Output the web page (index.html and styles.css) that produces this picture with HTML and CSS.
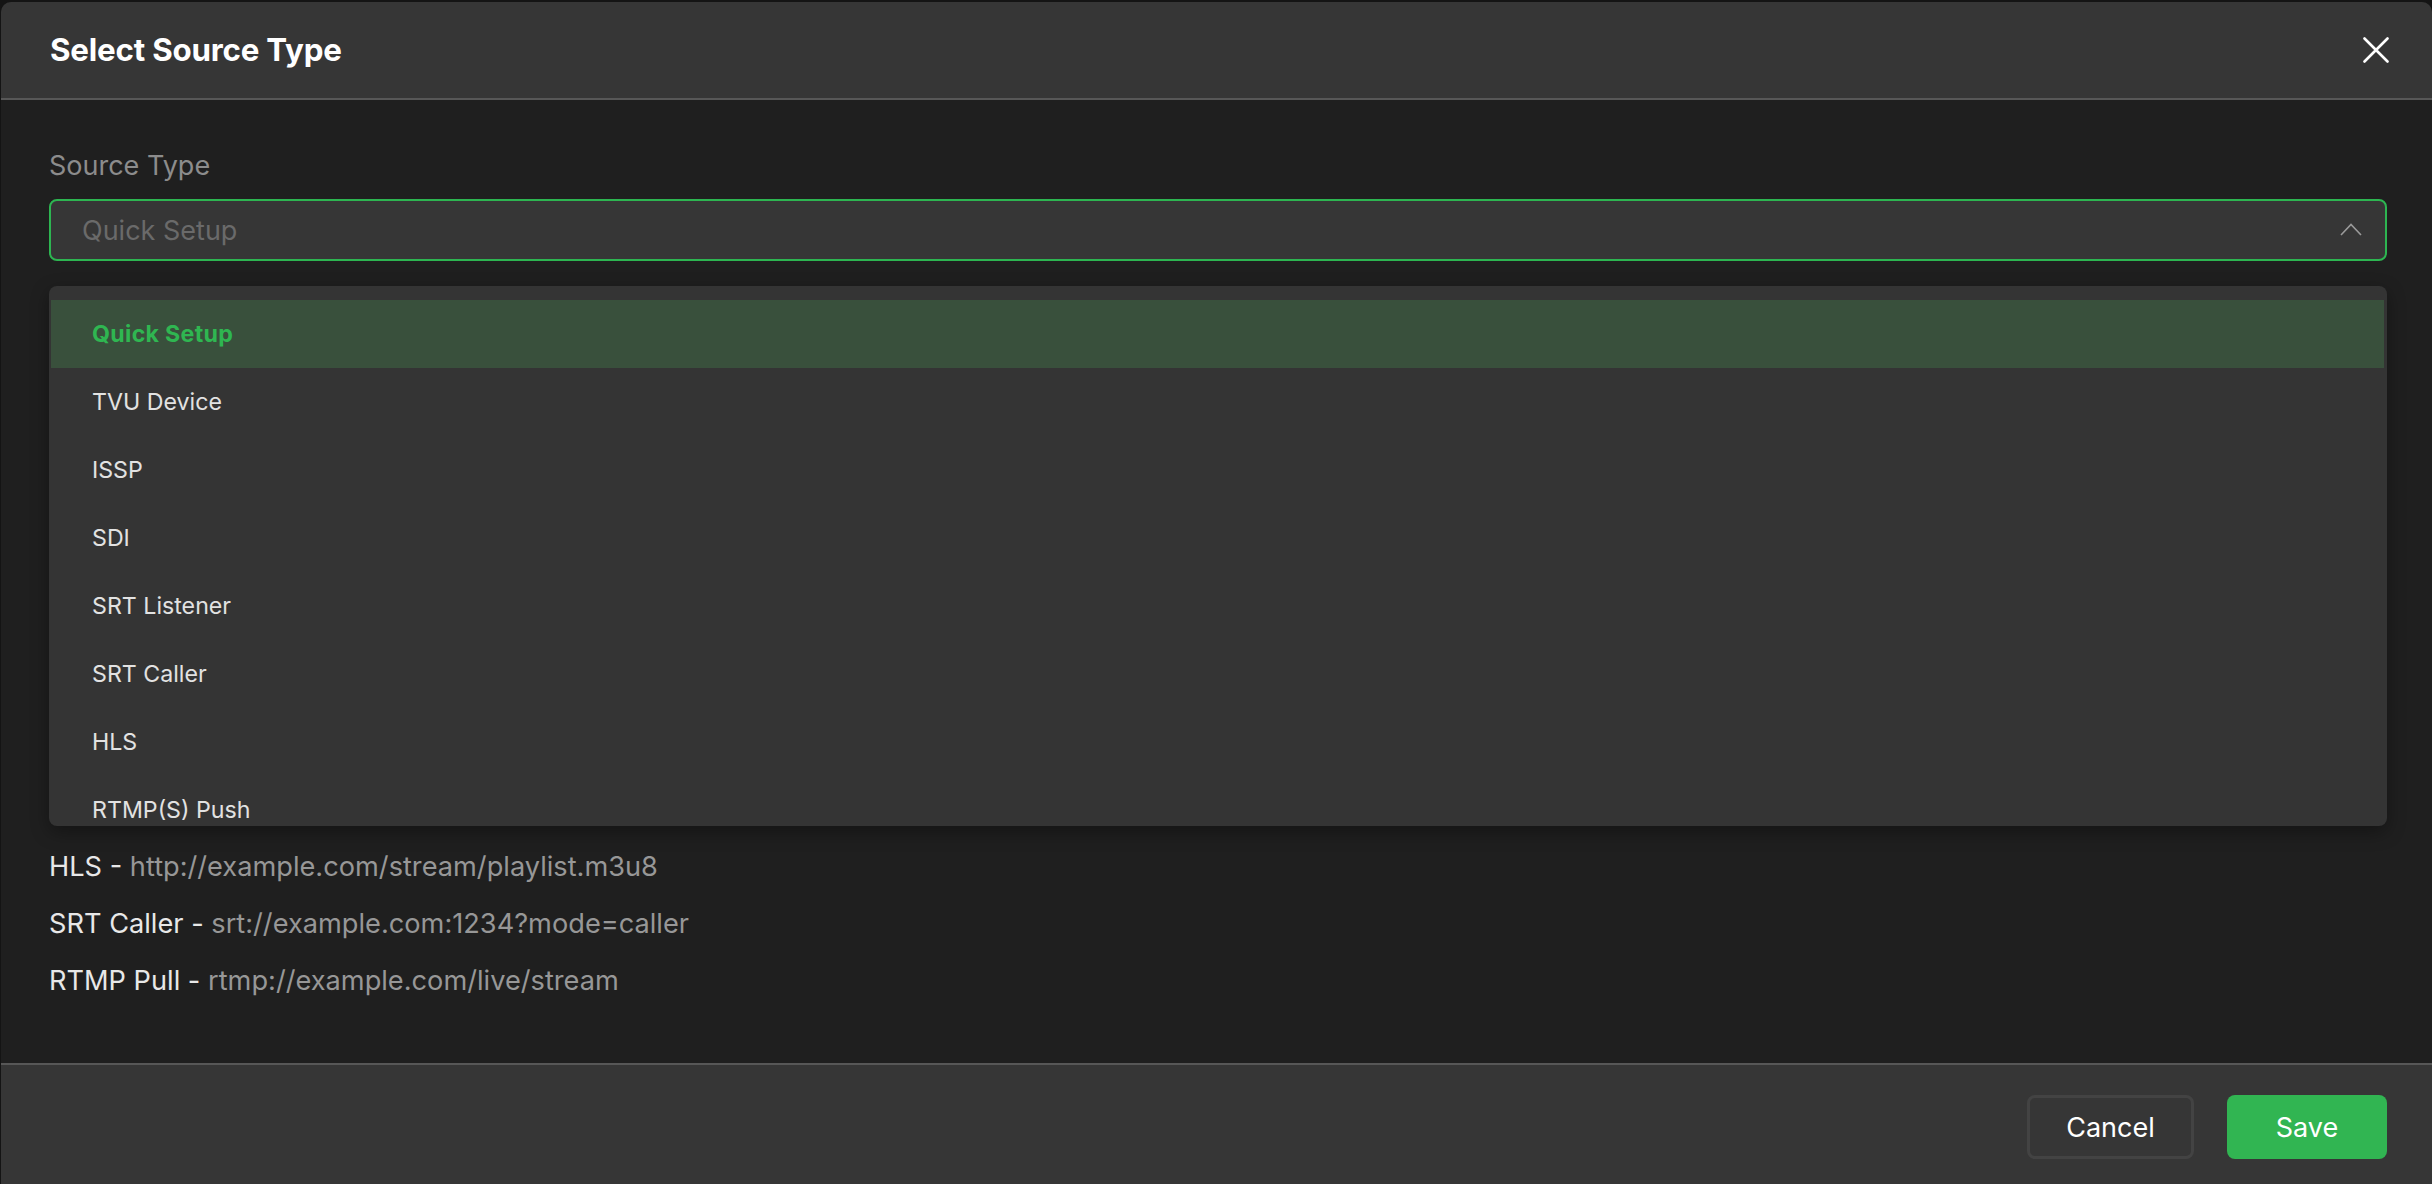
FILE: index.html
```html
<!DOCTYPE html>
<html lang="en">
<head>
<meta charset="utf-8">
<title>Select Source Type</title>
<link rel="stylesheet" href="styles.css">
</head>
<body>
<div class="modal">
  <header class="modal-header">
    <h2 class="modal-title">Select Source Type</h2>
    <button class="close-btn" aria-label="Close">
      <svg width="26" height="26" viewBox="0 0 26 26"><path d="M1.5 1.5 L24.5 24.5 M24.5 1.5 L1.5 24.5" stroke="#ffffff" stroke-width="2.6" stroke-linecap="round" fill="none"/></svg>
    </button>
  </header>
  <main class="modal-body">
    <label class="field-label">Source Type</label>
    <div class="select-wrap">
      <div class="select">
        <span class="placeholder">Quick Setup</span>
        <svg class="chevron" width="22" height="13" viewBox="0 0 22 13"><path d="M1 12 L11 1.5 L21 12" stroke="#9a9a9a" stroke-width="1.6" fill="none"/></svg>
      </div>
      <ul class="dropdown">
        <li class="option active">Quick Setup</li>
        <li class="option">TVU Device</li>
        <li class="option">ISSP</li>
        <li class="option">SDI</li>
        <li class="option">SRT Listener</li>
        <li class="option">SRT Caller</li>
        <li class="option">HLS</li>
        <li class="option">RTMP(S) Push</li>
      </ul>
    </div>
    <div class="examples">
      <p class="example"><span class="ex-key">HLS - </span><span class="ex-val">http://example.com/stream/playlist.m3u8</span></p>
      <p class="example"><span class="ex-key">SRT Caller - </span><span class="ex-val">srt://example.com:1234?mode=caller</span></p>
      <p class="example"><span class="ex-key">RTMP Pull - </span><span class="ex-val">rtmp://example.com/live/stream</span></p>
    </div>
  </main>
  <footer class="modal-footer">
    <button class="btn btn-cancel">Cancel</button>
    <button class="btn btn-save">Save</button>
  </footer>
</div>
</body>
</html>
```
FILE: styles.css
```css
* { box-sizing: border-box; }
html, body {
  margin: 0;
  padding: 0;
  height: 100%;
  overflow: hidden;
  background: #141414;
  font-family: Inter, "Noto Sans", "Liberation Sans", sans-serif;
}
.modal {
  margin: 2px 0 0 1px;
  height: calc(100vh - 2px);
  display: flex;
  flex-direction: column;
  background: #1f1f1f;
  border-radius: 10px 10px 0 0;
  overflow: hidden;
}
.modal-header {
  flex: 0 0 98px;
  display: flex;
  align-items: center;
  justify-content: space-between;
  padding: 0 43px 0 49px;
  background: #363636;
  border-bottom: 2px solid #575757;
}
.modal-title {
  margin: 0;
  font-size: 31.3px;
  font-weight: 700;
  color: #ffffff;
  letter-spacing: -0.2px;
}
.close-btn {
  width: 26px;
  height: 26px;
  padding: 0;
  border: 0;
  background: none;
  display: flex;
  cursor: pointer;
}
.modal-body {
  flex: 1;
  padding: 46px 45px 0 48px;
  display: flex;
  flex-direction: column;
}
.field-label {
  display: block;
  height: 40px;
  line-height: 40px;
  font-size: 27px;
  color: #8c8c8c;
}
.select-wrap {
  position: relative;
  margin-top: 13px;
}
.select {
  height: 62px;
  border: 2px solid #2db551;
  border-radius: 8px;
  background: #363636;
  display: flex;
  align-items: center;
  justify-content: space-between;
  padding: 0 23px 0 31px;
}
.placeholder {
  font-size: 27px;
  color: #6a6a6a;
}
.chevron { display: block; margin-top: -2px; }
.dropdown {
  position: absolute;
  top: 87px;
  left: 0;
  right: 0;
  height: 540px;
  margin: 0;
  padding: 14px 3px 0 2px;
  list-style: none;
  background: #343434;
  border-radius: 8px;
  overflow: hidden;
  box-shadow: 0 6px 18px rgba(0, 0, 0, 0.35);
}
.option {
  height: 68px;
  line-height: 68px;
  padding-left: 41px;
  font-size: 23.2px;
  color: #e2e2e2;
}
.option.active {
  background: #39503c;
  color: #2fb651;
  font-weight: 700;
  letter-spacing: 0.3px;
}
.examples {
  margin-top: 577px;
}
.example {
  margin: 0;
  height: 57px;
  line-height: 57px;
  font-size: 27.2px;
}
.ex-key { color: #e8e8e8; }
.ex-val { color: #979797; }
.modal-footer {
  flex: 0 0 121px;
  display: flex;
  justify-content: flex-end;
  align-items: flex-start;
  gap: 33px;
  padding: 30px 45px 0 0;
  background: #363636;
  border-top: 2px solid #575757;
}
.btn {
  height: 64px;
  border-radius: 8px;
  font-family: inherit;
  font-size: 27px;
  color: #ffffff;
  cursor: pointer;
}
.btn-cancel {
  width: 167px;
  background: #363636;
  border: 3px solid #434343;
}
.btn-save {
  width: 160px;
  background: #31b552;
  border: 0;
}
```
